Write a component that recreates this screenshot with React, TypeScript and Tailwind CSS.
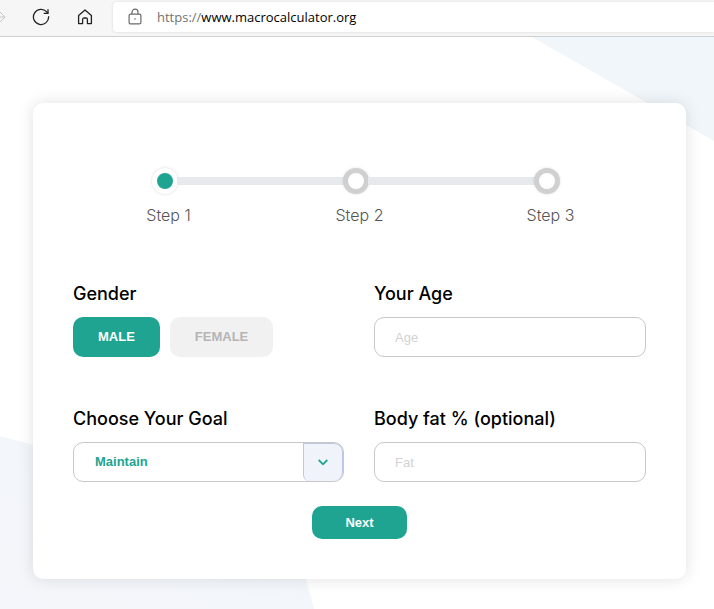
import { useState } from 'react';
import type { ReactNode } from 'react';

const STEPS = ['Step 1', 'Step 2', 'Step 3'];
const GENDERS = ['MALE', 'FEMALE'];
const GOALS = ['Maintain', 'Fat Loss', 'Muscle Gain'];

const inputClass =
  'h-10 w-full rounded-[10px] border border-[#c8c8c8] bg-white px-5 text-[13px] text-[#20a492] outline-none placeholder:text-[#d2d2d2]';

function BrowserBar() {
  return (
    <header className="flex h-[37px] items-start overflow-hidden border-b border-[#cfcfcf] bg-[#f6f6f6]">
      <nav className="flex h-[34px] w-[113px] shrink-0 items-center" aria-label="Browser">
        <button type="button" aria-label="Forward" className="w-8 shrink-0">
          <svg width="6" height="16" viewBox="0 0 6 16" fill="none" stroke="#c6c6c6">
            <path d="M0 8h5M0 3l5 5-5 5" />
          </svg>
        </button>
        <button type="button" aria-label="Refresh" className="w-11 shrink-0">
          <svg width="18" height="18" viewBox="0 0 18 18" fill="none" stroke="#222" strokeWidth="1.3">
            <path d="M16.6 8.2A7.6 7.6 0 1 1 14.7 3.9L16 5.3" />
            <path d="M16 1.2v4.2h-4.3" />
          </svg>
        </button>
        <button type="button" aria-label="Home" className="shrink-0">
          <svg width="18" height="18" viewBox="0 0 18 18" fill="none" stroke="#222" strokeWidth="1.3" strokeLinejoin="round">
            <path d="M2.6 7.4 9 1.9l6.4 5.5v8.2h-4v-4.2a1.4 1.4 0 0 0-1.4-1.4H8a1.4 1.4 0 0 0-1.4 1.4v4.2h-4z" />
          </svg>
        </button>
      </nav>
      <div className="mt-0.5 flex h-[30px] flex-1 items-center gap-3.5 rounded-l bg-white pl-3.5 shadow-[0_0_3px_rgba(0,0,0,0.12)]">
        <svg width="16" height="18" viewBox="0 0 16 18" fill="none" stroke="#6b6b6b" strokeWidth="1.2">
          <rect x="2.1" y="6.1" width="11.8" height="9.8" rx="1.5" />
          <path d="M5 6V4.200a3 3 0 0 1 6 0V6" />
          <circle cx="8" cy="11" r="0.8" fill="#6b6b6b" stroke="none" />
        </svg>
        <div
          role="textbox"
          aria-label="Address"
          className="font-['Open_Sans','Noto_Sans',sans-serif] text-[13px] leading-5 text-black"
        >
          <span className="text-[#737373]">https://</span>www.macrocalculator.org
        </div>
      </div>
    </header>
  );
}

function Backdrop() {
  return (
    <>
      <svg className="absolute top-0 right-0" width="182" height="104" viewBox="0 0 182 104" aria-hidden="true">
        <path d="M0 0h182v104z" fill="#f0f6f9" />
      </svg>
      <svg className="absolute bottom-0 left-0" width="314" height="173" viewBox="0 0 314 173" aria-hidden="true">
        <defs>
          <linearGradient id="haze" x1="1" y1="0" x2="0" y2="1">
            <stop offset="0" stopColor="#f0f6f9" />
            <stop offset="1" stopColor="#f5f6fb" />
          </linearGradient>
        </defs>
        <path d="M0 0 289 78 314 173H0z" fill="url(#haze)" />
      </svg>
    </>
  );
}

function Stepper({ current }: { current: number }) {
  return (
    <ol className="grid grid-cols-3">
      {STEPS.map((step, i) => (
        <li key={step} aria-current={i === current ? 'step' : undefined}>
          <div className="flex items-center">
            <span className={`h-2 flex-1 ${i > 0 ? 'bg-[#e7eaed]' : ''}`} />
            <span
              className={`-mx-px size-[26px] rounded-full border-5 ${
                i === current
                  ? 'border-white bg-[#20a492] shadow-[0_0_3px_rgba(0,0,0,0.15)]'
                  : 'border-[#d0d0d0] bg-white shadow-[0_0_3px_rgba(0,0,0,0.12)]'
              }`}
            />
            <span className={`h-2 flex-1 ${i < STEPS.length - 1 ? 'bg-[#e7eaed]' : ''}`} />
            <span className={`h-2 w-[7px] ${i < STEPS.length - 1 ? 'bg-[#e7eaed]' : ''}`} />
          </div>
          <p className="mt-[9px] text-center text-base font-light text-[#555]">{step}</p>
        </li>
      ))}
    </ol>
  );
}

function Field({ id, label, children }: { id: string; label: string; children: ReactNode }) {
  return (
    <div>
      <label htmlFor={id} className="mb-[11px] block text-lg leading-6 font-medium text-black">
        {label}
      </label>
      <div className="font-['Liberation_Sans',Arial,sans-serif]">{children}</div>
    </div>
  );
}

export default function App() {
  const [gender, setGender] = useState('MALE');
  const [goal, setGoal] = useState('Maintain');
  const [age, setAge] = useState('');
  const [fat, setFat] = useState('');

  return (
    <div className="flex min-h-screen flex-col bg-white font-['Inter','Open_Sans',sans-serif]">
      <BrowserBar />

      <main className="relative flex-1 overflow-hidden pt-[66px] pr-7 pb-[30px] pl-[33px]">
        <Backdrop />

        <form
          className="relative rounded-[10px] bg-white px-10 pt-[65px] pb-10 shadow-[0_0_16px_rgba(0,0,0,0.12)]"
          onSubmit={(e) => e.preventDefault()}
        >
          <Stepper current={0} />

          <div className="mt-[55px] grid grid-cols-[271fr_272fr] gap-x-[30px] gap-y-[50px]">
            {/* Gender */}
            <div role="group" aria-labelledby="gender-label">
              <p id="gender-label" className="mb-[11px] text-lg leading-6 font-medium text-black">
                Gender
              </p>
              <div className="flex gap-2.5 font-['Liberation_Sans',Arial,sans-serif]">
                {GENDERS.map((item) => (
                  <button
                    key={item}
                    type="button"
                    aria-pressed={gender === item}
                    onClick={() => setGender(item)}
                    className={`h-10 rounded-[10px] px-[25px] text-[13px] font-bold ${
                      gender === item ? 'bg-[#20a492] text-white' : 'bg-[#f1f1f1] text-[#b5b5b5]'
                    }`}
                  >
                    {item}
                  </button>
                ))}
              </div>
            </div>

            {/* Age */}
            <Field id="age" label="Your Age">
              <input
                id="age"
                type="text"
                inputMode="numeric"
                placeholder="Age"
                value={age}
                onChange={(e) => setAge(e.target.value)}
                className={inputClass}
              />
            </Field>

            {/* Goal */}
            <Field id="goal" label="Choose Your Goal">
              <div className="relative">
                <select
                  id="goal"
                  value={goal}
                  onChange={(e) => setGoal(e.target.value)}
                  className="h-10 w-full appearance-none rounded-[10px] border border-[#c8c8c8] bg-white pr-12 pl-[21px] text-[13px] font-bold text-[#20a492] outline-none"
                >
                  {GOALS.map((item) => (
                    <option key={item}>{item}</option>
                  ))}
                </select>
                <span className="pointer-events-none absolute inset-y-px right-px flex w-10 items-center justify-center rounded-r-[9px] rounded-bl-[6px] border border-b-0 border-[#bcc7e2] bg-[#f0f3f9]">
                  <svg width="10" height="7" viewBox="0 0 10 7" fill="none" stroke="#20a492" strokeWidth="1.8">
                    <path d="M0.700 1 5 5.300 9.300 1" />
                  </svg>
                </span>
              </div>
            </Field>

            {/* Body fat */}
            <Field id="fat" label="Body fat % (optional)">
              <input
                id="fat"
                type="text"
                inputMode="numeric"
                placeholder="Fat"
                value={fat}
                onChange={(e) => setFat(e.target.value)}
                className={inputClass}
              />
            </Field>
          </div>

          <div className="mt-6 flex justify-center">
            <button
              type="submit"
              className="h-[33px] rounded-[10px] bg-[#20a492] px-[33px] font-['Liberation_Sans',Arial,sans-serif] text-[13px] font-bold text-white"
            >
              Next
            </button>
          </div>
        </form>
      </main>
    </div>
  );
}
